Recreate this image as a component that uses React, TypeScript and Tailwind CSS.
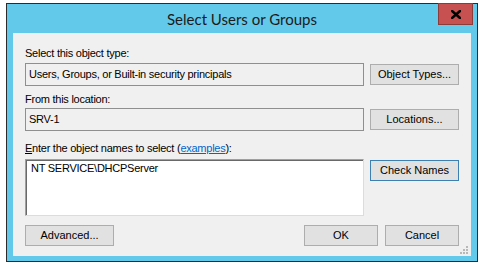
import React from "react"

const ui = { fontFamily: '"Liberation Sans", Arial, sans-serif' }

function Button({ label, width, primary }: { label: string; width: string; primary?: boolean }) {
  return (
    <button
      style={ui}
      className={`${width} h-[21px] shrink-0 bg-[#e1e1e1] border text-[11px] leading-[13px] tracking-normal text-black flex items-center justify-center ${
        primary ? "border-[#3c7fb1]" : "border-[#adadad]"
      }`}
    >
      {label}
    </button>
  )
}

export default function App() {
  return (
    <div className="w-[483px] h-[268px] bg-white pl-[6px] pt-[3px]">
      {/* window frame */}
      <div className="w-[472px] h-[259px] border border-[#2b2b2b] bg-[#63c9ea] flex flex-col px-[6px] pb-[5px]">
        {/* title bar */}
        <div className="h-[29px] shrink-0 grid grid-cols-[35px_1fr_35px] items-start">
          <div />
          <div
            style={{ fontFamily: 'Lato, "Liberation Sans", sans-serif' }}
            className="h-[29px] flex items-center justify-center text-[15px] text-[#1b1b1b] pt-px"
          >
            Select Users or Groups
          </div>
          <div className="-mt-px -mr-[2px] ml-[2px] w-[35px] h-[22px] bg-[#c75050] border border-[#8c3b3b] flex items-center justify-center">
            <svg width="10" height="9" viewBox="0 0 10 9">
              <path d="M1 1 L9 8 M9 1 L1 8" stroke="#000" strokeWidth="2.6" strokeLinecap="square" />
            </svg>
          </div>
        </div>

        {/* client area */}
        <div
          style={ui}
          className="relative flex-1 bg-[#f0f0f0] px-[12px] pt-[14px] flex flex-col text-[11px] leading-[13px] tracking-[-0.25px] text-black"
        >
          <div className="h-[13px]">Select this object type:</div>
          <div className="mt-[3px] flex items-center gap-[6px]">
            <div className="w-[339px] h-[23px] border border-[#8f8f8f] bg-[#f0f0f0] flex items-center pl-[3px]">
              Users, Groups, or Built-in security principals
            </div>
            <Button label="Object Types..." width="w-[89px]" />
          </div>

          <div className="mt-[7px] h-[13px]">From this location:</div>
          <div className="mt-[2px] flex items-center gap-[6px]">
            <div className="w-[339px] h-[23px] border border-[#8f8f8f] bg-[#f0f0f0] flex items-center pl-[3px]">
              SRV-1
            </div>
            <Button label="Locations..." width="w-[89px]" />
          </div>

          <div className="mt-[11px] h-[13px]">
            <span className="underline">E</span>nter the object names to select (
            <span className="text-[#0066cc] underline">examples</span>):
          </div>
          <div className="mt-[4px] flex items-start gap-[6px]">
            <div className="w-[339px] h-[57px] border border-[#a0a0a0] border-r-[#dcdcdc] border-b-[#dcdcdc] shadow-[inset_1px_1px_0_#696969] bg-white pl-[5px] pt-[2px]">
              NT SERVICE\DHCPServer
            </div>
            <div className="mt-px">
              <Button label="Check Names" width="w-[89px]" primary />
            </div>
          </div>

          <div className="mt-[9px] flex items-center">
            <Button label="Advanced..." width="w-[89px]" />
            <div className="flex-1" />
            <Button label="OK" width="w-[74px]" />
            <div className="w-[7px]" />
            <Button label="Cancel" width="w-[74px]" />
          </div>

          {/* resize grip */}
          <svg className="absolute right-[3px] bottom-[2px]" width="8" height="8" viewBox="0 0 8 8">
            <rect x="6" y="0" width="2" height="2" fill="#b8b8b8" />
            <rect x="3" y="3" width="2" height="2" fill="#b8b8b8" />
            <rect x="6" y="3" width="2" height="2" fill="#b8b8b8" />
            <rect x="0" y="6" width="2" height="2" fill="#b8b8b8" />
            <rect x="3" y="6" width="2" height="2" fill="#b8b8b8" />
            <rect x="6" y="6" width="2" height="2" fill="#b8b8b8" />
          </svg>
        </div>
      </div>
    </div>
  )
}
